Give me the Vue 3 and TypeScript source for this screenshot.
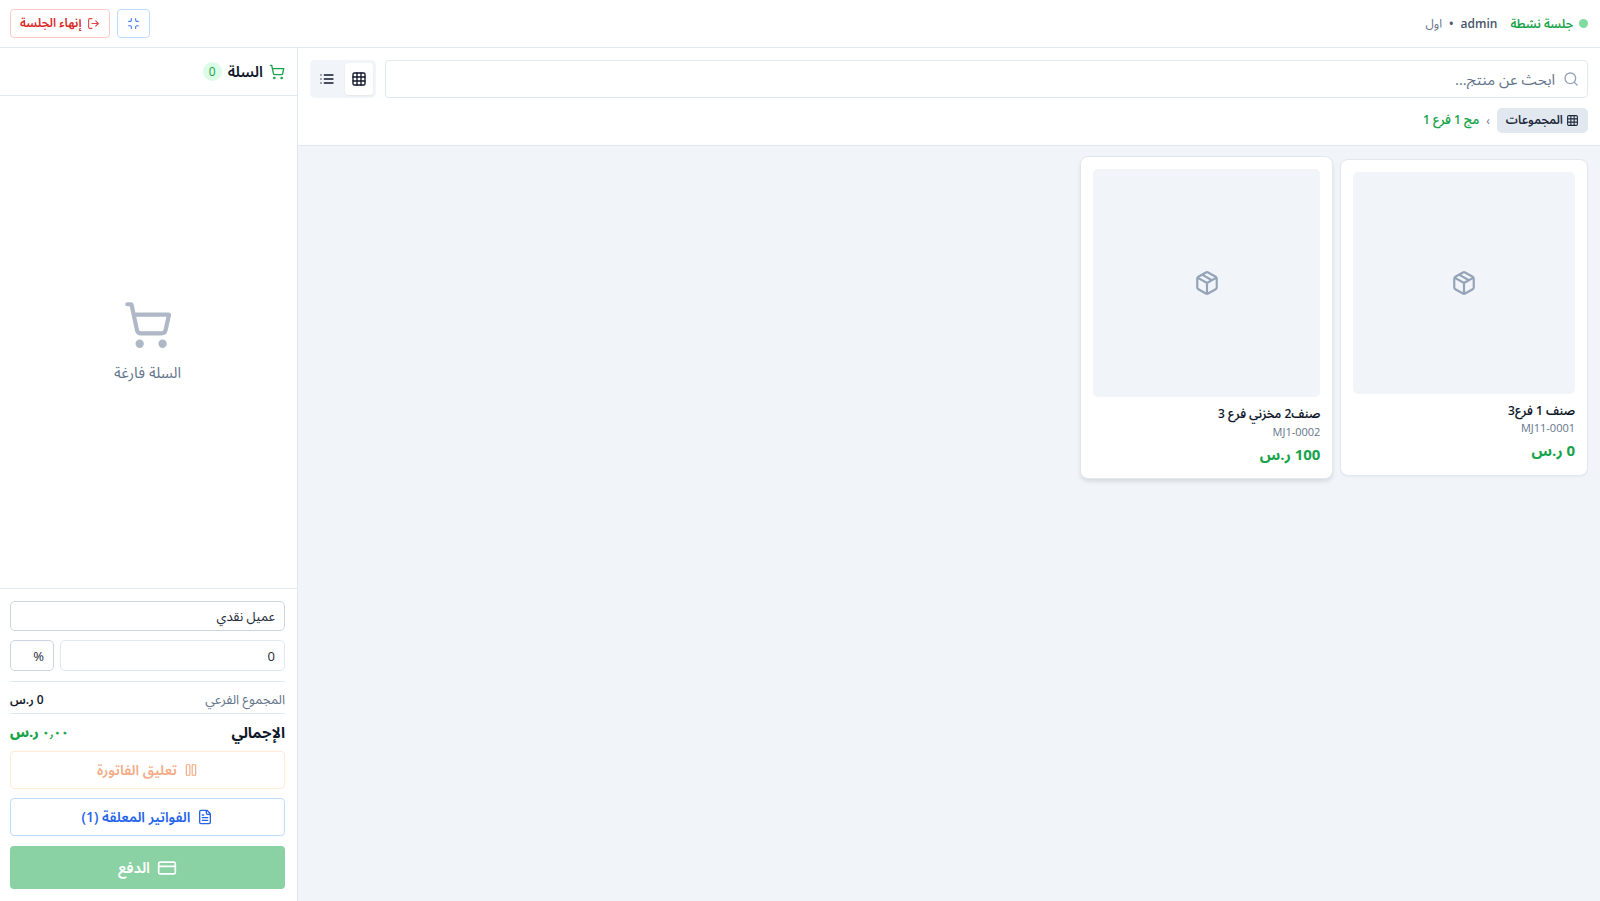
<script setup lang="ts">
import { ref } from 'vue'

interface Product {
  name: string
  code: string
  price: string
  raised: boolean
}

const products: Product[] = [
  { name: 'صنف 1 فرع3', code: 'MJ11-0001', price: '0 ر.س', raised: false },
  { name: 'صنف2 مخزني فرع 3', code: 'MJ1-0002', price: '100 ر.س', raised: true },
]

const view = ref<'grid' | 'list'>('grid')
const search = ref('')
const customer = ref('cash')
const discount = ref('0')
const discountType = ref('percent')
</script>

<template>
  <div class="pos" dir="rtl" lang="ar">
    <header class="topbar">
      <div class="session">
        <span class="dot"></span>
        <span class="status">جلسة نشطة</span>
        <span class="user"><b>admin</b><b>•</b><span class="branch">اول</span></span>
      </div>
      <div class="actions">
        <button class="btn-top blue" type="button" aria-label="تصغير الشاشة">
          <svg class="i13" viewBox="0 0 24 24"><path d="M8 3v3a2 2 0 0 1-2 2H3M21 8h-3a2 2 0 0 1-2-2V3M3 16h3a2 2 0 0 1 2 2v3M16 21v-3a2 2 0 0 1 2-2h3" /></svg>
        </button>
        <button class="btn-top red" type="button">
          <svg class="i13" viewBox="0 0 24 24"><path d="M9 21H5a2 2 0 0 1-2-2V5a2 2 0 0 1 2-2h4M16 17l5-5-5-5M21 12H9" /></svg>
          <span>إنهاء الجلسة</span>
        </button>
      </div>
    </header>

    <div class="body">
      <main class="catalog">
        <section class="tools">
          <div class="search-row">
            <label class="search">
              <svg class="i16" viewBox="0 0 24 24"><circle cx="11" cy="11" r="8" /><path d="m21 21-4.3-4.3" /></svg>
              <input v-model="search" type="text" placeholder="ابحث عن منتج..." aria-label="ابحث عن منتج" />
            </label>
            <div class="toggle">
              <button type="button" :class="{ on: view === 'grid' }" aria-label="عرض شبكي" @click="view = 'grid'">
                <svg class="i16" viewBox="0 0 24 24"><rect x="3" y="3" width="18" height="18" rx="2" /><path d="M3 9h18M3 15h18M9 3v18M15 3v18" /></svg>
              </button>
              <button type="button" :class="{ on: view === 'list' }" aria-label="عرض قائمة" @click="view = 'list'">
                <svg class="i16" viewBox="0 0 24 24"><path d="M8 6h13M8 12h13M8 18h13M3 6h.01M3 12h.01M3 18h.01" /></svg>
              </button>
            </div>
          </div>
          <nav class="crumbs">
            <button type="button" class="crumb-root">
              <svg class="i13" viewBox="0 0 24 24"><rect x="3" y="3" width="18" height="18" rx="2" /><path d="M3 9h18M3 15h18M9 3v18M15 3v18" /></svg>
              <span>المجموعات</span>
            </button>
            <span class="sep">›</span>
            <span class="current">مج 1 فرع 1</span>
          </nav>
        </section>

        <section class="grid">
          <article v-for="p in products" :key="p.code" class="card" :class="{ raised: p.raised }">
            <div class="thumb">
              <svg viewBox="0 0 24 24"><path d="M11 21.73a2 2 0 0 0 2 0l7-4A2 2 0 0 0 21 16V8a2 2 0 0 0-1-1.73l-7-4a2 2 0 0 0-2 0l-7 4A2 2 0 0 0 3 8v8a2 2 0 0 0 1 1.73zM12 22V12M3.3 7l8.7 5 8.7-5M7.5 4.27l9 5.15" /></svg>
            </div>
            <h3>{{ p.name }}</h3>
            <p class="code">{{ p.code }}</p>
            <p class="price">{{ p.price }}</p>
          </article>
        </section>
      </main>

      <aside class="cart">
        <div class="cart-head">
          <svg class="i16" viewBox="0 0 24 24"><circle cx="8" cy="21" r="1" /><circle cx="19" cy="21" r="1" /><path d="M2.05 2.05h2l2.66 12.42a2 2 0 0 0 2 1.58h9.78a2 2 0 0 0 1.95-1.57l1.65-7.43H5.12" /></svg>
          <h2>السلة</h2>
          <span class="count">0</span>
        </div>

        <div class="empty">
          <svg viewBox="0 0 24 24"><circle cx="8" cy="21" r="1" /><circle cx="19" cy="21" r="1" /><path d="M2.05 2.05h2l2.66 12.42a2 2 0 0 0 2 1.58h9.78a2 2 0 0 0 1.95-1.57l1.65-7.43H5.12" /></svg>
          <p>السلة فارغة</p>
        </div>

        <div class="checkout">
          <select v-model="customer" class="field customer" aria-label="العميل">
            <option value="cash">عميل نقدي</option>
          </select>
          <div class="discount">
            <input v-model="discount" class="field amount" type="text" inputmode="decimal" aria-label="الخصم" />
            <select v-model="discountType" class="field kind" aria-label="نوع الخصم">
              <option value="percent">%</option>
            </select>
          </div>
          <div class="subtotal">
            <span>المجموع الفرعي</span>
            <b>0 ر.س</b>
          </div>
          <div class="total">
            <span>الإجمالي</span>
            <b>٠٫٠٠ ر.س</b>
          </div>
          <button type="button" class="big hold" disabled>
            <svg class="i14" viewBox="0 0 24 24"><rect x="14" y="3" width="6" height="18" rx="1" /><rect x="4" y="3" width="6" height="18" rx="1" /></svg>
            <span>تعليق الفاتورة</span>
          </button>
          <button type="button" class="big held">
            <svg class="i16" viewBox="0 0 24 24"><path d="M15 2H6a2 2 0 0 0-2 2v16a2 2 0 0 0 2 2h12a2 2 0 0 0 2-2V7zM14 2v4a2 2 0 0 0 2 2h4M10 9H8M16 13H8M16 17H8" /></svg>
            <span>الفواتير المعلقة (1)</span>
          </button>
          <button type="button" class="big pay" disabled>
            <svg class="i20" viewBox="0 0 24 24"><rect x="2" y="5" width="20" height="14" rx="2" /><path d="M2 10h20" /></svg>
            <span>الدفع</span>
          </button>
        </div>
      </aside>
    </div>
  </div>
</template>

<style>
body {
  margin: 0;
}
</style>

<style scoped>
* {
  box-sizing: border-box;
}
.pos {
  min-height: 100vh;
  display: flex;
  flex-direction: column;
  font-family: 'Open Sans', 'Noto Sans', 'Noto Sans Arabic', 'DejaVu Sans', sans-serif;
  font-size: 13px;
  color: #0f172a;
  background: #fff;
}
button,
input,
select {
  font: inherit;
  color: inherit;
  margin: 0;
}
button {
  cursor: pointer;
}
h2,
h3,
p {
  margin: 0;
}
svg {
  flex: none;
  fill: none;
  stroke: currentColor;
  stroke-width: 2;
  stroke-linecap: round;
  stroke-linejoin: round;
}
.i13 { width: 13px; height: 13px; }
.i14 { width: 14px; height: 14px; }
.i16 { width: 16px; height: 16px; }
.i20 { width: 20px; height: 20px; }

.topbar {
  height: 48px;
  padding: 0 12px 0 10px;
  display: flex;
  align-items: center;
  justify-content: space-between;
  border-bottom: 1px solid #e2e8f0;
}
.session {
  display: flex;
  align-items: center;
  font-size: 12px;
  line-height: 20px;
}
.dot {
  width: 9px;
  height: 9px;
  border-radius: 50%;
  background: #7fdc9f;
}
.status {
  margin-right: 6px;
  font-weight: 600;
  color: #16a34a;
}
.user {
  margin-right: 13px;
  display: flex;
  gap: 7px;
  color: #475569;
}
.user b {
  font-weight: 600;
}
.branch {
  color: #64748b;
}
.actions {
  display: flex;
  gap: 7px;
}
.btn-top {
  height: 29px;
  padding: 0 9px;
  display: flex;
  align-items: center;
  gap: 6px;
  border: 1px solid;
  border-radius: 4px;
  background: #fff;
  font-size: 12px;
  font-weight: 600;
}
.btn-top svg {
  opacity: 0.85;
}
.btn-top.blue {
  color: #2563eb;
  border-color: #bfdbfe;
}
.btn-top.red {
  color: #dc2626;
  border-color: #fecaca;
}

.body {
  flex: 1;
  display: flex;
}
.catalog {
  flex: 1;
  min-width: 0;
  display: flex;
  flex-direction: column;
  background: #f1f5f9;
}
.tools {
  padding: 12px;
  display: flex;
  flex-direction: column;
  gap: 10px;
  background: #fff;
  border-bottom: 1px solid #e2e8f0;
}
.search-row {
  display: flex;
  gap: 9px;
}
.search {
  flex: 1;
  height: 38px;
  padding: 0 8px;
  display: flex;
  align-items: center;
  gap: 8px;
  border: 1px solid #e2e8f0;
  border-radius: 4px;
  color: #94a3b8;
}
.search input {
  flex: 1;
  min-width: 0;
  padding: 0;
  border: 0;
  outline: 0;
  background: transparent;
  font-size: 15px;
  color: #0f172a;
}
.search input::placeholder {
  color: #64748b;
  opacity: 1;
}
.toggle {
  display: flex;
  gap: 4px;
  padding: 3px;
  border-radius: 5px;
  background: #f1f5f9;
}
.toggle button {
  width: 28px;
  padding: 0;
  display: flex;
  align-items: center;
  justify-content: center;
  border: 0;
  border-radius: 4px;
  background: transparent;
}
.toggle .on {
  background: #fff;
  box-shadow: 0 1px 2px rgba(15, 23, 42, 0.06);
}
.crumbs {
  display: flex;
  align-items: center;
  font-size: 12px;
  font-weight: 600;
}
.crumb-root {
  height: 25px;
  padding: 0 9px;
  display: flex;
  align-items: center;
  gap: 3px;
  border: 0;
  border-radius: 5px;
  background: #e2e8f0;
  color: #1e293b;
}
.sep {
  margin: 0 7px;
  font-weight: 400;
  color: #64748b;
}
.current {
  color: #16a34a;
}

.grid {
  padding: 13px 12px;
  display: grid;
  grid-template-columns: repeat(auto-fill, minmax(230px, 1fr));
  gap: 10px;
}
.card {
  padding: 12px;
  border: 1px solid #e2e8f0;
  border-radius: 8px;
  background: #fff;
  box-shadow: 0 1px 2px rgba(15, 23, 42, 0.05);
}
.card.raised {
  margin: -3px;
  box-shadow: 0 3px 5px -1px rgba(15, 23, 42, 0.14);
}
.thumb {
  aspect-ratio: 1;
  display: flex;
  align-items: center;
  justify-content: center;
  border-radius: 5px;
  background: #f1f5f9;
  color: #94a3b8;
}
.thumb svg {
  width: 26px;
  height: 26px;
}
.card h3 {
  margin-top: 8px;
  font-size: 12px;
  line-height: 18px;
  font-weight: 600;
}
.code {
  font-size: 11px;
  line-height: 16px;
  color: #64748b;
}
.price {
  margin-top: 3px;
  font-size: 15px;
  line-height: 23px;
  font-weight: 700;
  color: #16a34a;
}
.raised .code {
  margin-top: 1px;
}

.cart {
  width: 298px;
  display: flex;
  flex-direction: column;
  border-right: 1px solid #e2e8f0;
}
.cart-head {
  height: 48px;
  padding: 0 12px 0 10px;
  display: flex;
  align-items: center;
  gap: 6px;
  border-bottom: 1px solid #e2e8f0;
  color: #16a34a;
}
.cart-head h2 {
  font-size: 15px;
  font-weight: 600;
  color: #0f172a;
}
.count {
  width: 19px;
  height: 19px;
  border-radius: 50%;
  background: #dcfce7;
  font-size: 12px;
  line-height: 19px;
  text-align: center;
}
.empty {
  flex: 1;
  display: flex;
  flex-direction: column;
  align-items: center;
  justify-content: center;
  gap: 10px;
  padding-right: 2px;
  font-size: 15px;
  line-height: 24px;
  color: #64748b;
}
.empty svg {
  width: 50px;
  height: 50px;
  color: #afb8c6;
}
.checkout {
  padding: 12px 12px 12px 10px;
  display: flex;
  flex-direction: column;
  border-top: 1px solid #e2e8f0;
}
.field {
  appearance: none;
  padding: 0 9px;
  border: 1px solid #cbd5e1;
  border-radius: 5px;
  background: #fff;
  font-size: 13px;
  line-height: 26px;
  color: #1e293b;
  outline: 0;
}
.customer {
  height: 30px;
}
.discount {
  margin: 9px 0 10px;
  display: flex;
  gap: 6px;
}
.amount {
  flex: 1;
  min-width: 0;
  height: 31px;
  border-color: #e2e8f0;
}
.kind {
  width: 44px;
  height: 31px;
}
.subtotal,
.total {
  display: flex;
  align-items: center;
  justify-content: space-between;
  border-top: 1px solid #e2e8f0;
}
.subtotal {
  height: 32px;
  padding-top: 5px;
  font-size: 12px;
}
.subtotal span {
  font-size: 13px;
  color: #64748b;
}
.subtotal b {
  font-weight: 600;
}
.total {
  height: 38px;
  font-size: 15px;
  font-weight: 700;
}
.total b {
  font-size: 13px;
  color: #16a34a;
}
.big {
  height: 38px;
  padding: 0 6px;
  display: flex;
  align-items: center;
  justify-content: center;
  gap: 7px;
  border: 1px solid;
  border-radius: 4px;
  background: #fff;
  font-size: 14px;
  font-weight: 600;
}
.hold {
  color: #f4ab86;
  border-color: #ffead5;
}
.held {
  margin: 9px 0 10px;
  color: #2563eb;
  border-color: #bfdbfe;
}
.pay {
  height: 43px;
  border: 0;
  background: #8ad1a4;
  color: #fff;
  font-size: 15px;
}
</style>
